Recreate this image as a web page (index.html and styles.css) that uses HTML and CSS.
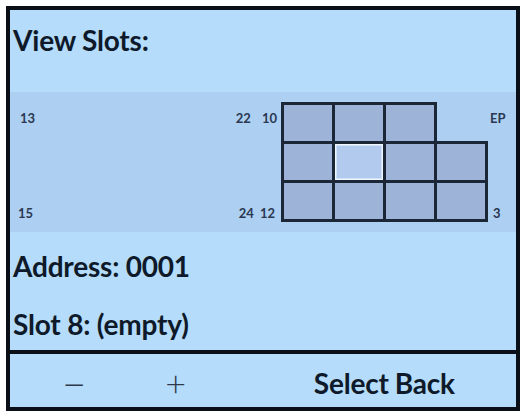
FILE: index.html
```html
<!DOCTYPE html>
<html lang="en">
<head>
<meta charset="utf-8">
<title>View Slots</title>
<link rel="stylesheet" href="styles.css">
</head>
<body>
<div class="screen">
  <div class="main">
    <h1 class="title">View Slots:</h1>
    <div class="map">
      <div class="side-left">
        <div class="lrow lrow-top"><span>13</span><span class="pair pair-top"><span>22</span><span>10</span></span></div>
        <div class="lrow lrow-bottom"><span>15</span><span class="pair pair-bottom"><span>24</span><span>12</span></span></div>
      </div>
      <div class="grid">
        <div class="cell"></div>
        <div class="cell"></div>
        <div class="cell"></div>
        <div class="blank"></div>
        <div class="cell"></div>
        <div class="cell selected"></div>
        <div class="cell"></div>
        <div class="cell"></div>
        <div class="cell"></div>
        <div class="cell"></div>
        <div class="cell"></div>
        <div class="cell"></div>
      </div>
      <div class="side-right">
        <span class="ep">EP</span>
        <span class="three">3</span>
      </div>
    </div>
    <p class="line line-address">Address: 0001</p>
    <p class="line line-slot">Slot 8: (empty)</p>
  </div>
  <div class="footer">
    <span class="key key-minus">&minus;</span>
    <span class="key key-plus">+</span>
    <span class="key key-select">Select</span>
    <span class="key key-back">Back</span>
  </div>
</div>
</body>
</html>
```

FILE: styles.css
```css
html, body {
  margin: 0;
  padding: 0;
  background: #ffffff;
}

body {
  font-family: Lato, "Open Sans", "DejaVu Sans", sans-serif;
  color: #0e1a2a;
}

.screen {
  box-sizing: border-box;
  width: 514px;
  height: 405px;
  margin: 6px 0 0 6px;
  border: 4px solid #0a0f18;
  background: #b5dcfb;
  display: flex;
  flex-direction: column;
}

.main {
  height: 340px;
  display: flex;
  flex-direction: column;
}

.title,
.line {
  margin: 0;
  font-size: 28px;
  font-weight: 700;
  line-height: 32px;
  padding-left: 3px;
  letter-spacing: -0.2px;
}

.title {
  margin-top: 14px;
}

.map {
  margin-top: 36px;
  height: 140px;
  display: flex;
  align-items: center;
  background: #adcff1;
}

.side-left {
  flex: 1;
  align-self: stretch;
  display: flex;
  flex-direction: column;
  justify-content: space-between;
  padding: 19px 0 12px 0;
}

.lrow,
.side-right span {
  font-size: 13px;
  font-weight: 700;
  line-height: 14px;
  color: #2a3852;
}

.lrow {
  display: flex;
  justify-content: space-between;
}

.lrow-top {
  padding: 0 4px 0 10px;
}

.lrow-bottom {
  padding: 0 6px 0 8px;
}

.pair {
  display: flex;
}

.pair-top {
  gap: 11px;
}

.pair-bottom {
  gap: 6px;
}

.grid {
  display: grid;
  grid-template-columns: repeat(4, 51px);
  grid-template-rows: repeat(3, 39px);
  padding: 0 3px 3px 0;
}

.cell {
  box-sizing: border-box;
  margin: 0 -3px -3px 0;
  border: 3px solid #1b2636;
  background: #9db4d8;
}

.cell.selected {
  background: #b2caed;
  box-shadow: inset 0 0 0 1.5px #eef6ff;
}

.side-right {
  width: 28px;
  align-self: stretch;
  display: flex;
  flex-direction: column;
  justify-content: space-between;
  padding: 19px 0 12px 0;
}

.ep {
  padding-left: 2px;
}

.three {
  padding-left: 5px;
}

.line-address {
  margin-top: 18px;
}

.line-slot {
  margin-top: 26px;
}

.footer {
  flex: 1;
  border-top: 4px solid #0a0f18;
  display: flex;
  align-items: center;
  padding-top: 4px;
  font-size: 28px;
  line-height: 32px;
}

.key {
  font-weight: 700;
  letter-spacing: -0.2px;
}

.key-minus,
.key-plus {
  font-weight: 300;
  color: #2e3a4c;
  line-height: 32px;
}

.key-minus {
  font-size: 42px;
  margin-left: 52px;
}

.key-plus {
  font-size: 36px;
  margin-left: 79px;
}

.key-select {
  margin-left: 128px;
}

.key-back {
  margin-left: 6px;
}
```
